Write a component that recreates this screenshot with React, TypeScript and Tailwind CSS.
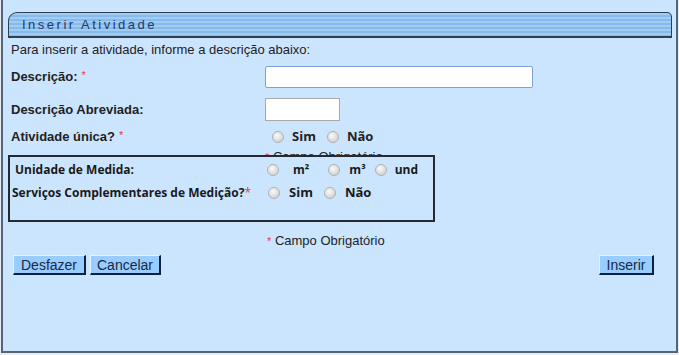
import React from 'react';

// Radio button look-alike (unchecked)
const Radio = ({ className = '' }: { className?: string }) => (
  <span
    className={`inline-block w-[12px] h-[12px] shrink-0 rounded-full border border-[#b0b0b0] bg-[radial-gradient(circle_at_40%_35%,#fafafa_0%,#dedede_55%,#c4c4c4_100%)] ${className}`}
  />
);

const Req = () => <span className="text-[#e23c3c] text-[11px] font-normal align-top ml-1">*</span>;

const Button = ({ label, className = '' }: { label: string; className?: string }) => (
  <button
    className={`h-[20px] px-[5px] bg-[#99ccff] text-[14px] leading-[16px] text-[#172a45] border border-t-[#e5f2ff] border-l-[#e5f2ff] border-b-[#10213d] border-r-[#10213d] border-b-2 border-r-2 ${className}`}
  >
    {label}
  </button>
);

const App = () => {
  return (
    <div className="w-[679px] h-[355px] bg-[#e6edf5] font-['Liberation_Sans',Arial,sans-serif] text-[#222]">
      <div className="ml-px w-[677px] h-[353px] bg-[#cce5ff] border-l-2 border-r-2 border-b-2 border-[#55647a] pt-[12px] pl-[5px] pr-[4px]">
        {/* Header */}
        <div className="h-[26px] rounded-tl-[9px] rounded-tr-[5px] border border-b-2 border-[#2f3f52] bg-[repeating-linear-gradient(to_bottom,#a3ccf3_0px,#a3ccf3_2px,#86b9ec_2px,#86b9ec_4px)] flex items-center pl-[13px]">
          <span className="text-[13px] tracking-[2.5px] text-[#1d3a6a]">Inserir Atividade</span>
        </div>

        <div className="pl-[3px]">
          <p className="mt-[4px] text-[13px] leading-[15px]">Para inserir a atividade, informe a descrição abaixo:</p>

          {/* Descrição */}
          <div className="mt-[9px] flex items-center h-[22px]">
            <div className="w-[254px] text-[13px] font-bold">
              Descrição:<Req />
            </div>
            <div className="w-[268px] h-[22px] bg-white border border-[#7f9fd6] rounded-[2px]" />
          </div>

          {/* Descrição Abreviada */}
          <div className="mt-[10px] flex items-center h-[23px]">
            <div className="w-[254px] text-[13px] font-bold">Descrição Abreviada:</div>
            <div className="w-[75px] h-[23px] bg-white border border-[#a9a9a9]" />
          </div>

          {/* Atividade única */}
          <div className="mt-[6px] flex items-center h-[20px] font-['Open_Sans',sans-serif]">
            <div className="w-[261px] text-[13px] font-bold font-['Liberation_Sans',Arial,sans-serif]">
              Atividade única?<Req />
            </div>
            <Radio />
            <span className="ml-[8px] text-[13px] font-bold">Sim</span>
            <Radio className="ml-[11px]" />
            <span className="ml-[8px] text-[13px] font-bold">Não</span>
          </div>

          {/* partly hidden by the box below, as on the original page */}
          <p className="mt-[2px] pl-[254px] text-[13px] leading-[15px]">
            <span className="text-[#e23c3c] text-[11px]">*</span> Campo Obrigatório
          </p>
        </div>

        {/* Medição box */}
        <div className="relative -mt-[10px] w-[427px] h-[67px] bg-[#cce5ff] border-2 border-[#262a30] font-['Open_Sans',sans-serif] font-bold text-[12px] text-[#1a1a1a]">
          <div className="mt-[4px] flex items-center h-[18px] pl-[5px]">
            <div className="w-[252px]">Unidade de Medida:</div>
            <Radio />
            <span className="ml-[14px]">m²</span>
            <Radio className="ml-[19px]" />
            <span className="ml-[9px]">m³</span>
            <Radio className="ml-[9px]" />
            <span className="ml-[8px]">und</span>
          </div>
          <div className="mt-[5px] flex items-center h-[18px] pl-[2px]">
            <div className="w-[256px] whitespace-nowrap">
              Serviços Complementares de Medição?<span className="text-[#e23c3c] font-normal">*</span>
            </div>
            <Radio />
            <span className="ml-[9px] text-[13px]">Sim</span>
            <Radio className="ml-[11px]" />
            <span className="ml-[9px] text-[13px]">Não</span>
          </div>
        </div>

        <p className="mt-[11px] pl-[259px] text-[13px] leading-[15px]">
          <span className="text-[#e23c3c] text-[11px]">*</span> Campo Obrigatório
        </p>

        {/* Buttons */}
        <div className="mt-[6px] flex items-center pl-[5px] pr-[18px]">
          <Button label="Desfazer" className="w-[73px]" />
          <Button label="Cancelar" className="ml-[4px] w-[71px]" />
          <Button label="Inserir" className="ml-auto w-[55px]" />
        </div>
      </div>
    </div>
  );
};

export default App;
